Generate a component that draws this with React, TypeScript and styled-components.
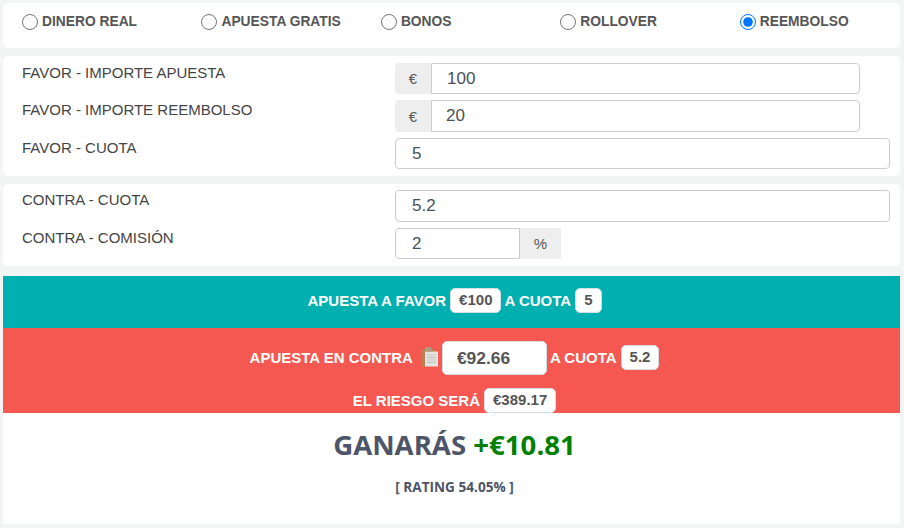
import React from 'react'
import styled, { createGlobalStyle } from 'styled-components'

const GlobalStyle = createGlobalStyle`
  html, body {
    margin: 0;
    padding: 0;
    background: #f3f4f4;
    font-family: "Liberation Sans", Arial, sans-serif;
  }
  * { box-sizing: border-box; }
`

const modes = ['DINERO REAL', 'APUESTA GRATIS', 'BONOS', 'ROLLOVER', 'REEMBOLSO']

const Page = styled.div`
  width: 904px;
  height: 528px;
  overflow: hidden;
  padding: 3px 4px 0 3px;
  display: flex;
  flex-direction: column;
`

const Panel = styled.section<{ $height: number; $mb: number }>`
  height: ${({ $height }) => $height}px;
  margin-bottom: ${({ $mb }) => $mb}px;
  background: #fff;
  border-radius: 5px;
  flex-shrink: 0;
`

const RadioRow = styled(Panel)`
  display: grid;
  grid-template-columns: repeat(5, 179.45px);
  padding: 11px 0 0 19px;
`

const RadioLabel = styled.label`
  display: flex;
  align-items: flex-start;
  gap: 4px;
  font-size: 13.8px;
  font-weight: 700;
  line-height: 15px;
  color: #555;

  input {
    width: 16px;
    height: 16px;
    margin: 0;
    flex-shrink: 0;
  }
`

const FormPanel = styled(Panel)`
  padding: 7px 10px 0 19px;
  display: flex;
  flex-direction: column;
  gap: 6px;
`

const ContraPanel = styled(FormPanel)`
  padding-top: 6px;
`

const Row = styled.div<{ $height: number }>`
  display: grid;
  grid-template-columns: 373px 1fr;
  height: ${({ $height }) => $height}px;
`

const Label = styled.div`
  font-size: 15px;
  line-height: 20px;
  color: #444;
`

const Group = styled.div<{ $width: number }>`
  display: flex;
  width: ${({ $width }) => $width}px;
  height: 100%;
`

const Addon = styled.span<{ $side: 'left' | 'right'; $width: number }>`
  width: ${({ $width }) => $width}px;
  flex-shrink: 0;
  display: flex;
  align-items: center;
  justify-content: center;
  background: #eee;
  color: #555;
  font-size: 15px;
  border-radius: ${({ $side }) => ($side === 'left' ? '4px 0 0 4px' : '0')};
`

const Field = styled.input<{ $round?: string; $pad?: number }>`
  flex: 1;
  min-width: 0;
  width: 100%;
  height: 100%;
  padding: 0 15px 0 ${({ $pad }) => $pad ?? 16}px;
  border: 1px solid #ccc;
  border-radius: ${({ $round }) => $round || '4px'};
  background: #fff;
  color: #495057;
  font-family: "Liberation Sans", Arial, sans-serif;
  font-size: 17px;
  outline: none;
`

const Band = styled.div<{ $bg: string }>`
  background: ${({ $bg }) => $bg};
  color: #fff;
  font-size: 15px;
  font-weight: 700;
  display: flex;
  flex-direction: column;
  align-items: center;
  flex-shrink: 0;
  padding-left: 6px;
`

const TealBand = styled(Band)`
  height: 52px;
  justify-content: center;
  padding-bottom: 3px;
`

const RedBand = styled(Band)`
  height: 85px;
  padding-top: 11px;
  overflow: hidden;
`

const Line = styled.div`
  display: flex;
  align-items: center;
  gap: 3px;
  white-space: nowrap;
`

const RiskLine = styled(Line)`
  margin-top: 13px;
`

const Chip = styled.span`
  background: #fff;
  color: #555;
  font-size: 15px;
  font-weight: 700;
  line-height: 16px;
  padding: 3px 8px 4px;
  border: 1px solid #d5dde5;
  border-radius: 5px;
  margin-left: 1px;
`

const Stake = styled.span`
  width: 105px;
  height: 34px;
  margin: 2px 0 0 1px;
  padding-left: 14px;
  display: flex;
  align-items: center;
  background: #fff;
  color: #555;
  font-size: 17.4px;
  font-weight: 700;
  border: 1px solid #d5dde5;
  border-radius: 5px;
`

const Clip = styled.svg`
  width: 17px;
  height: 20px;
  margin-left: 5px;
  flex-shrink: 0;
`

const Result = styled.div`
  height: 111px;
  padding-left: 6px;
  background: #fff;
  display: flex;
  flex-direction: column;
  align-items: center;
  font-family: "Open Sans", "Noto Sans", sans-serif;
  font-weight: 700;
  color: #4e5568;
`

const Total = styled.div`
  margin-top: 11px;
  font-size: 27.6px;
  line-height: 40px;
  white-space: nowrap;
`

const Profit = styled.span`
  color: #008000;
`

const Rating = styled.div`
  margin-top: 14px;
  font-size: 13.6px;
  line-height: 17px;
`

const ClipboardIcon = () => (
  <Clip viewBox="0 0 17 20" aria-hidden="true">
    <rect x="0" y="2" width="14" height="17.5" rx="1.5" fill="#b98050" />
    <rect x="4" y="4.5" width="13" height="15" fill="#e4e4e0" />
    <path d="M6 8h9M6 10.5h9M6 13h9M6 15.5h9" stroke="#c0c0bc" strokeWidth="1" />
    <rect x="4" y="0" width="6.5" height="4.5" rx="1" fill="#b09a82" />
  </Clip>
)

export default function App() {
  return (
    <Page>
      <GlobalStyle />
      <RadioRow $height={45} $mb={8} as="form">
        {modes.map((mode) => (
          <RadioLabel key={mode}>
            <input type="radio" name="mode" defaultChecked={mode === 'REEMBOLSO'} />
            {mode}
          </RadioLabel>
        ))}
      </RadioRow>

      <FormPanel $height={120} $mb={8}>
        <Row $height={31}>
          <Label>FAVOR - IMPORTE APUESTA</Label>
          <Group $width={465}>
            <Addon $side="left" $width={36}>€</Addon>
            <Field readOnly value="100" $pad={15} $round="0 4px 4px 0" />
          </Group>
        </Row>
        <Row $height={32}>
          <Label>FAVOR - IMPORTE REEMBOLSO</Label>
          <Group $width={465}>
            <Addon $side="left" $width={36}>€</Addon>
            <Field readOnly value="20" $pad={14} $round="0 4px 4px 0" />
          </Group>
        </Row>
        <Row $height={31}>
          <Label>FAVOR - CUOTA</Label>
          <Field readOnly value="5" />
        </Row>
      </FormPanel>

      <ContraPanel $height={82} $mb={10}>
        <Row $height={32}>
          <Label>CONTRA - CUOTA</Label>
          <Field readOnly value="5.2" />
        </Row>
        <Row $height={31}>
          <Label>CONTRA - COMISIÓN</Label>
          <Group $width={166}>
            <Field readOnly value="2" $round="4px 0 0 4px" />
            <Addon $side="right" $width={41}>%</Addon>
          </Group>
        </Row>
      </ContraPanel>

      <TealBand $bg="#00afaf">
        <Line>
          APUESTA A FAVOR <Chip>€100</Chip> A CUOTA <Chip>5</Chip>
        </Line>
      </TealBand>

      <RedBand $bg="#f45850">
        <Line>
          APUESTA EN CONTRA
          <ClipboardIcon />
          <Stake>€92.66</Stake>
          A CUOTA <Chip>5.2</Chip>
        </Line>
        <RiskLine>
          EL RIESGO SERÁ <Chip>€389.17</Chip>
        </RiskLine>
      </RedBand>

      <Result>
        <Total>
          GANARÁS <Profit>+€10.81</Profit>
        </Total>
        <Rating>[ RATING 54.05% ]</Rating>
      </Result>
    </Page>
  )
}
